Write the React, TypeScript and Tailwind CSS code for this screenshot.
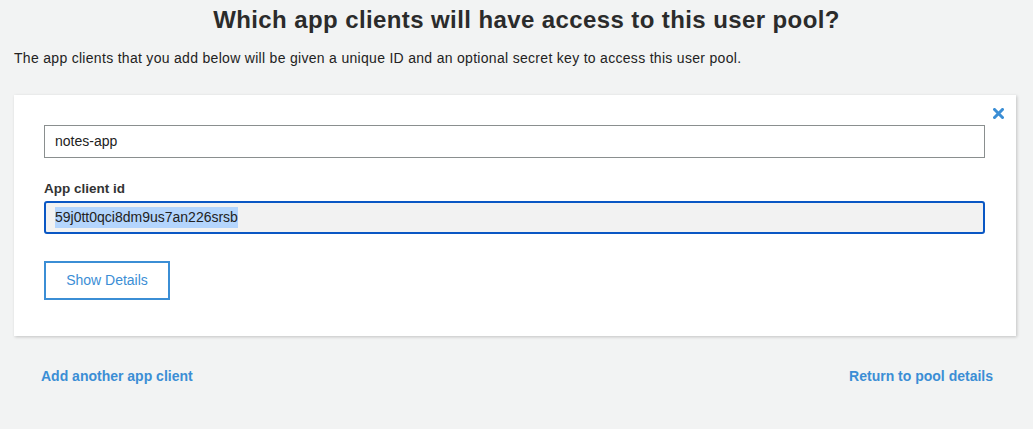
import React from 'react';

export default function App() {
  return (
    <div className="min-h-[429px] w-full bg-[#f2f3f3] font-['Liberation_Sans',Arial,sans-serif] text-[#333]">
      <div className="pl-[14px] pr-[17px] pt-[6px]">
        <h1 className="pl-[23px] text-center text-[24px] font-bold leading-[28px] tracking-[0.4px] text-[#2b2b2b]">
          Which app clients will have access to this user pool?
        </h1>
        <p className="mt-[16px] text-[14px] leading-[17px] tracking-[0.3px] text-[#222]">
          The app clients that you add below will be given a unique ID and an optional secret key to access this user pool.
        </p>

        <div className="relative mt-[28px] bg-white pl-[30px] pr-[31px] pt-[30px] pb-[36px] shadow-[1px_1px_3px_rgba(0,0,0,0.2)]">
          <button className="absolute right-[12px] top-[13px] text-[#3b8ed5]">
            <svg width="11" height="11" viewBox="0 0 11 11">
              <path d="M1.5 1.5 L9.5 9.5 M9.5 1.5 L1.5 9.5" stroke="currentColor" strokeWidth="3" strokeLinecap="square" />
            </svg>
          </button>

          <div className="flex h-[33px] items-center border border-[#8a8f8f] px-[10px] text-[14px] text-[#222]">
            notes-app
          </div>

          <label className="mt-[23px] block text-[13.5px] font-bold leading-[16px] text-[#333]">App client id</label>
          <div className="mt-[4px] flex h-[33px] items-center rounded-[3px] border-2 border-[#0a57c4] bg-[#f2f2f2] px-[9px] text-[14px] text-[#222]">
            <span className="bg-[#b4d5fd]">59j0tt0qci8dm9us7an226srsb</span>
          </div>

          <button className="mt-[27px] flex h-[39px] w-[126px] items-center justify-center border-2 border-[#3b8ed5] bg-white text-[14px] text-[#3b8ed5]">
            Show Details
          </button>
        </div>

        <div className="mt-[32px] flex items-center justify-between pl-[27px] pr-[23px] leading-[17px]">
          <a className="text-[14px] font-bold text-[#3b8ed5]">Add another app client</a>
          <a className="text-[14px] font-bold text-[#3b8ed5]">Return to pool details</a>
        </div>
      </div>
    </div>
  );
}
